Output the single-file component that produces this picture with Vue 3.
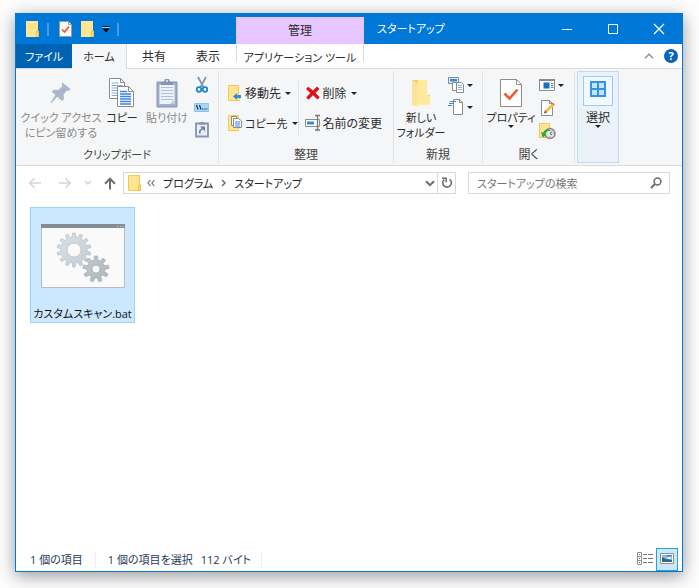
<script setup>
import { ref } from 'vue'

const search = ref('')

function gear(cx, cy, inner, outer, teeth, hole) {
  const step = (Math.PI * 2) / teeth
  const at = (r, a) => `${(cx + r * Math.cos(a)).toFixed(2)} ${(cy + r * Math.sin(a)).toFixed(2)}`
  let d = ''
  for (let i = 0; i < teeth; i++) {
    const a = i * step - Math.PI / 2
    d += `${i ? 'L' : 'M'}${at(inner, a - step * 0.3)}L${at(outer, a - step * 0.18)}L${at(outer, a + step * 0.18)}L${at(inner, a + step * 0.3)}`
  }
  return `${d}ZM${cx - hole} ${cy}a${hole} ${hole} 0 1 0 ${hole * 2} 0a${hole} ${hole} 0 1 0 ${-hole * 2} 0Z`
}

const bigGear = gear(33, 26, 13, 17, 14, 7)
const smallGear = gear(55, 45, 9, 13, 9, 4)
</script>

<template>
  <div class="desktop">
    <main class="window">
      <header class="titlebar">
        <div class="quick">
          <svg class="q-folder" width="14" height="17" viewBox="0 0 14 17"><path d="M0 0h12v10h1v6H0z" fill="#ffe592" /><path d="M10.500 15.500v-5h2v5z" fill="#ffe592" stroke="#e8c04a" /></svg>
          <span class="q-bar"></span>
          <button class="q-prop" aria-label="プロパティ">
            <svg width="13" height="16" viewBox="0 0 13 16"><path d="M.5.500h9l3 3v12H.5z" fill="#fafafa" stroke="#9b9b9b" /><path d="M9.500.500v3h3" fill="none" stroke="#9b9b9b" /><path d="M3 8.500l2.500 2.500L10 5.500" fill="none" stroke="#e8562a" stroke-width="1.700" /></svg>
          </button>
          <button class="q-new" aria-label="新しいフォルダー">
            <svg width="14" height="17" viewBox="0 0 14 17"><path d="M0 0h12v10h1v6H0z" fill="#ffe592" /><path d="M10.500 15.500v-5h2v5z" fill="#ffe592" stroke="#e8c04a" /></svg>
          </button>
          <button class="q-more" aria-label="クイック アクセス ツール バーのカスタマイズ">
            <svg width="8" height="8" viewBox="0 0 8 8"><path d="M0 1.500h8" stroke="#0b1a28" /><path d="M0 2.500h8" stroke="#9cc9ee" /><path d="M.5 3.500h7L4 7.500z" fill="#000" /></svg>
          </button>
          <span class="q-bar"></span>
        </div>
        <div class="context">管理</div>
        <h1 class="title">スタートアップ</h1>
        <div class="controls">
          <button aria-label="最小化"><svg width="12" height="12" viewBox="0 0 12 12"><path d="M1 6.500h10" stroke="#fff" /></svg></button>
          <button aria-label="最大化"><svg width="12" height="12" viewBox="0 0 12 12"><path d="M1.500 1.500h9v9h-9z" fill="none" stroke="#fff" /></svg></button>
          <button aria-label="閉じる"><svg width="12" height="12" viewBox="0 0 12 12"><path d="M1 1l10 10M11 1L1 11" stroke="#fff" stroke-width="1.200" /></svg></button>
        </div>
      </header>

      <nav class="tabs">
        <button class="tab file">ファイル</button>
        <button class="tab home">ホーム</button>
        <button class="tab wide">共有</button>
        <button class="tab wide">表示</button>
        <button class="tab tools">アプリケーション ツール</button>
        <button class="mini collapse" aria-label="リボンの最小化"><svg width="10" height="6" viewBox="0 0 10 6"><path d="M1 5.200l4-4 4 4" fill="none" stroke="#8c8c8c" stroke-width="1.300" /></svg></button>
        <button class="mini help" aria-label="ヘルプ">?</button>
      </nav>

      <section class="ribbon">
        <div class="group clip">
          <div class="tools-row">
            <button class="big off pin">
              <span class="pic"><svg width="22" height="24" viewBox="0 0 22 24"><path d="M12.500 1.500l8 6.500-2 2-1.700-.4-3.300 4.100.6 4.300-2 1.900-4.900-4.200L1 22.500l-.2-1.600 4.700-7-3.700-3.200 1.800-2 4.600.2 4.200-3.500-.8-2z" fill="#a9b7c9" /></svg></span>
              クイック アクセス<br />にピン留めする
            </button>
            <button class="big copy">
              <span class="pic"><svg width="26" height="30" viewBox="0 0 26 30">
                <path d="M.5.500h11l4 4v16H.5z" fill="#fff" stroke="#8b8b8b" /><path d="M11.500.500v4h4" fill="none" stroke="#8b8b8b" /><path d="M2.500 5h7M2.500 7.500h11M2.500 10h11M2.500 12.500h11M2.500 15h11M2.500 17.500h11" stroke="#7daee8" />
                <path d="M8.500 8.500h11l5 5v15h-16z" fill="#fff" stroke="#8b8b8b" /><path d="M19.500 8.500v5h5" fill="none" stroke="#8b8b8b" /><path d="M11 13.500h7M11 16h11M11 18.500h11M11 21h11M11 23.500h11M11 26h11" stroke="#3e84df" stroke-width="1.300" />
              </svg></span>
              コピー
            </button>
            <button class="big off paste">
              <span class="pic"><svg width="22" height="30" viewBox="0 0 22 30"><path d="M1 4h20v25H1z" fill="#9fb0c8" stroke="#8496b2" /><path d="M3.500 7h15v19h-15z" fill="#eef3fa" /><path d="M5 9.500h12M5 12.500h12M5 15.500h12M5 18.500h12M5 21.500h12" stroke="#a9c0df" /><path d="M14 26l4.500-4.500V26z" fill="#bccbe0" /><path d="M5 7V4h3l1-3h4l1 3h3v3z" fill="#8496ac" /><circle cx="11" cy="3" r="1" fill="#eef3fa" /></svg></span>
              貼り付け
            </button>
            <div class="smalls">
              <button class="small" aria-label="切り取り"><svg width="14" height="18" viewBox="0 0 14 18"><path d="M3 1l6 11M11 1L5 12" stroke="#8497a6" stroke-width="1.800" fill="none" /><circle cx="4" cy="13.500" r="2.300" fill="none" stroke="#1884ce" stroke-width="1.700" /><circle cx="10" cy="13.500" r="2.300" fill="none" stroke="#1884ce" stroke-width="1.700" /></svg></button>
              <button class="small" aria-label="パスのコピー"><svg width="15" height="9" viewBox="0 0 15 9"><path d="M.5.500h14v8H.5z" fill="#a9d8f7" stroke="#8ec4e8" /><path d="M2.500 2l1.500 4.500M5.500 2L7 6.500" stroke="#123c5c" stroke-width="1.200" /><path d="M8 6h1.300M10.300 6h1.300M12.400 6h1" stroke="#123c5c" /></svg></button>
              <button class="small" aria-label="ショートカットの貼り付け"><svg width="14" height="17" viewBox="0 0 14 17"><path d="M1 2.500h12v13H1z" fill="#e9eff8" stroke="#8496b2" stroke-width="1.800" /><path d="M4 3.500V1.500h2L7 .3l1 1.200h2v2H4z" fill="#8496ac" /><path d="M4.800 12.500V10L8 7" fill="none" stroke="#71839e" stroke-width="1.700" /><path d="M5 5.500h5v5z" fill="#71839e" /></svg></button>
            </div>
          </div>
          <div class="caption">クリップボード</div>
        </div>

        <div class="group organize">
          <div class="tools-row">
            <div class="lines">
              <button class="line"><svg width="16" height="18" viewBox="0 0 16 18"><path d="M1.500 1.500h10v11h1v4h-11z" fill="#ffe592" stroke="#efc95a" /><path d="M6 12.500l4-3.500v2h4v3h-4v2z" fill="#2d8dde" /></svg>移動先<i class="caret"></i></button>
              <button class="line kana"><svg width="16" height="18" viewBox="0 0 16 18"><path d="M1.500 1.500h10v15h-10z" fill="#ffe592" stroke="#efc95a" /><path d="M4.500 2.500h5v9h-5z" fill="#fff" stroke="#8b8b8b" /><path d="M6.500 4.500h5l3 2.500v6.500h-8z" fill="#fff" stroke="#8b8b8b" /><path d="M8 8h5M8 10h5M8 12h5" stroke="#3e84df" /></svg>コピー先<i class="caret"></i></button>
            </div>
            <span class="split"></span>
            <div class="lines">
              <button class="line"><svg width="16" height="18" viewBox="0 0 16 18"><path d="M1 5l2.200-2.200L8 6.500l4-3.900L14.500 5l-4 4 4.300 4.200-2.300 2.300L8 11.300 3.500 15.700 1.200 13.500 5.300 9z" fill="#d8141c" /></svg>削除<i class="caret"></i></button>
              <button class="line"><svg width="16" height="18" viewBox="0 0 16 18"><path d="M.5 5.500h14v7H.5z" fill="#fff" stroke="#8b8b8b" /><path d="M2 7.500h7v3H2z" fill="#2b8fe6" /><path d="M10 1.500h5M12.500 2v13.500M10 16h5" stroke="#777" stroke-width="1.300" /></svg>名前の変更</button>
            </div>
          </div>
          <div class="caption">整理</div>
        </div>

        <div class="group fresh">
          <div class="tools-row">
            <button class="big">
              <span class="pic"><svg width="20" height="30" viewBox="0 0 20 30"><path d="M1 2h14v15h4v10H1z" fill="#f5cf68" /><path d="M7 2h9v15l3 2v8H7z" fill="#ffe99c" /><path d="M1 2l6 4v23l-6-2z" fill="#ffe39a" /></svg></span>
              新しい<br />フォルダー
            </button>
            <div class="smalls">
              <button class="small" aria-label="新しいアイテム"><svg width="17" height="18" viewBox="0 0 17 18"><path d="M.5 1.500h10v6H.5z" fill="#dcefff" stroke="#8b8b8b" /><path d="M2 3h7v2.500H2z" fill="#368cd8" /><path d="M4.500 6.500h6v8h-6z" fill="#fff" stroke="#8b8b8b" /><path d="M8.500 6.500h5l2 2v8h-7z" fill="#fff" stroke="#8b8b8b" /><path d="M10 9.500h4M10 11.500h4M10 13.500h4" stroke="#7daee8" /></svg><i class="caret"></i></button>
              <button class="small" aria-label="ショートカット"><svg width="17" height="18" viewBox="0 0 17 18"><path d="M5.500 1.500h6l3 3v12h-9z" fill="#fff" stroke="#8b8b8b" /><path d="M11.500 1.500v3h3" fill="none" stroke="#8b8b8b" /><path d="M2 3.500h6M1 5.500h5M0 7.500h4" stroke="#3e84df" /></svg><i class="caret"></i></button>
            </div>
          </div>
          <div class="caption">新規</div>
        </div>

        <div class="group open">
          <div class="tools-row">
            <button class="big">
              <span class="pic"><svg width="22" height="30" viewBox="0 0 22 30"><path d="M.5 1.500h16l5 5v22H.5z" fill="#fff" stroke="#8b8b8b" /><path d="M16.500 1.500v5h5" fill="none" stroke="#8b8b8b" /><path d="M4.500 15.500l5 5 8-9" fill="none" stroke="#f0592a" stroke-width="2.600" /></svg></span>
              プロパティ
              <i class="caret under"></i>
            </button>
            <div class="smalls">
              <button class="small" aria-label="開く"><svg width="17" height="18" viewBox="0 0 17 18"><path d="M.5 3.500h15v11H.5z" fill="#fff" stroke="#8b8b8b" /><path d="M0 4h16" stroke="#8b8b8b" stroke-width="2" /><path d="M4.500 6.500h6v6h-6z" fill="#1570c8" /><path d="M12 7.500h2.500M12 9.500h2.500M12 11.500h2.500" stroke="#777" /></svg><i class="caret"></i></button>
              <button class="small" aria-label="編集"><svg width="17" height="18" viewBox="0 0 17 18"><path d="M2.500 1.500h8l3 3v12h-11z" fill="#fff" stroke="#8b8b8b" /><path d="M10.500 1.500v3h3" fill="none" stroke="#8b8b8b" /><path d="M5 14.500l1-3 7-7 2 2-7 7z" fill="#f6bc45" /><path d="M5 14.500l1-3 2 2z" fill="#555" /><path d="M13 4.500l2 2 .8-.8-2-2z" fill="#e65a3c" /></svg></button>
              <button class="small" aria-label="履歴"><svg width="17" height="18" viewBox="0 0 17 18"><path d="M.5 1.500h10v14H.5z" fill="#ffe592" stroke="#efc95a" /><circle cx="11" cy="11.500" r="5" fill="#e6e6e6" stroke="#888" stroke-width="1.400" /><path d="M13.500 9.200L11 11.500l2 1.500M11 7.800v.8M14.500 11.500h.8M11 14.500v.8" stroke="#555" fill="none" /><path d="M2 10l1.500 5.500L8 13l-1.700-.8c.7-2 2.300-3.400 5-3.700-1-1.700-5.300-2-7.300 2.200z" fill="#2fae3c" /></svg></button>
            </div>
          </div>
          <div class="caption">開く</div>
        </div>

        <button class="select">
          <span class="select-pic"><svg width="16" height="16" viewBox="0 0 16 16"><path d="M1 1h14v14H1zM8 1v14M1 8h14" fill="#c3e6fc" stroke="#3593e0" stroke-width="2" /></svg></span>
          選択
          <i class="caret under"></i>
        </button>
      </section>

      <section class="addressbar">
        <div class="history">
          <button aria-label="戻る"><svg width="14" height="12" viewBox="0 0 14 12"><path d="M13 6H2M6.500 1.200L1.700 6l4.800 4.800" fill="none" stroke="#d5d5d5" stroke-width="1.500" /></svg></button>
          <button aria-label="進む"><svg width="14" height="12" viewBox="0 0 14 12"><path d="M1 6h11M7.500 1.200L12.300 6l-4.800 4.800" fill="none" stroke="#d5d5d5" stroke-width="1.500" /></svg></button>
          <button aria-label="最近表示した場所"><svg width="8" height="6" viewBox="0 0 8 6"><path d="M1 1l3 3 3-3" fill="none" stroke="#d0d0d0" stroke-width="1.400" /></svg></button>
          <button aria-label="上へ"><svg width="12" height="13" viewBox="0 0 12 13"><path d="M6 12.500V2M1 6.700l5-5 5 5" fill="none" stroke="#6d6d6d" stroke-width="2" /></svg></button>
        </div>
        <div class="path">
          <svg width="14" height="17" viewBox="0 0 14 17"><path d="M.5.500h11v9h1v6H.5z" fill="#ffe592" stroke="#efc95a" /><path d="M10.500 15.500v-5h2v5z" fill="#ffe592" stroke="#e8c04a" /></svg>
          <svg class="more" width="8" height="8" viewBox="0 0 8 8"><path d="M3.500 1L1 4l2.500 3M7.300 1L4.800 4l2.500 3" fill="none" stroke="#666" stroke-width="1.100" /></svg>
          <a href="#">プログラム</a>
          <svg class="sep" width="5" height="8" viewBox="0 0 5 8"><path d="M1 1l3 3-3 3" fill="none" stroke="#666" stroke-width="1.400" /></svg>
          <a href="#">スタートアップ</a>
          <button class="drop" aria-label="以前の場所"><svg width="10" height="7" viewBox="0 0 10 7"><path d="M1 1.200l4 4 4-4" fill="none" stroke="#6d6d6d" stroke-width="2" /></svg></button>
          <button class="reload" aria-label="最新の情報に更新"><svg width="12" height="12" viewBox="0 0 12 12"><path d="M8.600 2.300A4.300 4.300 0 1 1 3.200 2.600" fill="none" stroke="#6d6d6d" stroke-width="1.600" /><path d="M1 1.200h4.200v4" fill="none" stroke="#6d6d6d" stroke-width="1.500" /></svg></button>
        </div>
        <label class="search">
          <input v-model="search" type="text" placeholder="スタートアップの検索" aria-label="スタートアップの検索" />
          <svg width="12" height="12" viewBox="0 0 12 12"><circle cx="7.500" cy="4.500" r="3.400" fill="none" stroke="#6d6d6d" stroke-width="1.500" /><path d="M5 7L1 11" stroke="#6d6d6d" stroke-width="2" /></svg>
        </label>
      </section>

      <section class="files">
        <button class="item">
          <svg width="84" height="65" viewBox="0 0 84 65">
            <defs>
              <linearGradient id="metal" x1="0" y1="0" x2="1" y2="1"><stop offset="0" stop-color="#dbe2e7" /><stop offset="1" stop-color="#c3ccd3" /></linearGradient>
              <linearGradient id="steel" x1="0" y1="0" x2="1" y2="1"><stop offset="0" stop-color="#c2cacf" /><stop offset="1" stop-color="#adb6ba" /></linearGradient>
            </defs>
            <path d="M.5.500h83v63H.5z" fill="#fafafa" stroke="#b6bcc1" />
            <path d="M0 0h84v4H0z" fill="#858d92" />
            <path d="M76 2.500h1M79 2.500h1M81.500 2.500h1" stroke="#cfd5d9" />
            <path :d="bigGear" fill="url(#metal)" stroke="#b9c3ca" stroke-width=".8" fill-rule="evenodd" />
            <path :d="smallGear" fill="url(#steel)" stroke="#a5aeb3" stroke-width=".8" fill-rule="evenodd" />
          </svg>
          <span>カスタムスキャン.bat</span>
        </button>
      </section>

      <footer class="status">
        <span class="count">1 個の項目</span>
        <span class="chosen">1 個の項目を選択<span class="size">112 バイト</span></span>
        <button class="view" aria-label="詳細"><svg width="16" height="14" viewBox="0 0 16 14"><path d="M.5.500h4v12h-4zM.5 4.500h4M.5 8.500h4" fill="#fff" stroke="#8f8f8f" /><path d="M2 2.500h1" stroke="#39c" /><path d="M2 6.500h1" stroke="#55a" /><path d="M2 10.500h1" stroke="#a22" /><path d="M6 2.500h4M11 2.500h5M6 6.500h4M11 6.500h5M6 10.500h4M11 10.500h5" stroke="#777" /></svg></button>
        <button class="view active" aria-label="大アイコン"><svg width="14" height="12" viewBox="0 0 14 12"><path d="M.5.500h13v10H.5z" fill="#fff" stroke="#8f8f8f" /><path d="M2 2h10v7H2z" fill="#80bfe9" /><path d="M2 2h4l2 2 4-1V2z" fill="#3c86c9" /><path d="M2 4l4 2 6 1v2H2z" fill="#36648a" /><path d="M7 4h4v2H8z" fill="#eef6fb" /></svg></button>
      </footer>
    </main>
  </div>
</template>

<style>
body {
  margin: 0;
  background: #fff;
}
</style>

<style scoped>
.desktop,
.desktop * {
  box-sizing: border-box;
}
.desktop {
  display: flex;
  min-height: 100vh;
  padding: 13px 16px 16px 15px;
  background: #fdfdfd;
  font-family: "Open Sans", "Noto Sans CJK JP", sans-serif;
  font-feature-settings: "palt";
  font-size: 11px;
  line-height: 15px;
  color: #2b2b2b;
}
button {
  padding: 0;
  border: 0;
  background: none;
  color: inherit;
  font: inherit;
  font-feature-settings: inherit;
  white-space: nowrap;
}
svg {
  display: block;
  flex: none;
}
.window {
  display: flex;
  flex: 1;
  flex-direction: column;
  min-width: 0;
  border: 1px solid #0078d7;
  background: #fff;
  box-shadow: 0 4px 16px rgba(0, 0, 0, 0.4);
}
.titlebar {
  display: flex;
  height: 30px;
  background: #0078d7;
}
.quick {
  display: flex;
  align-items: center;
  width: 220px;
  padding-left: 10px;
}
.q-bar {
  width: 2px;
  height: 13px;
  margin-left: 7px;
  background: #4c9bdc;
}
.q-prop {
  margin-left: 10px;
}
.q-new {
  margin-left: 9px;
}
.q-more {
  margin-left: 7px;
}
.context {
  display: flex;
  align-items: center;
  justify-content: center;
  width: 128px;
  margin-top: 3px;
  background: #e8c6ff;
  font-size: 12px;
}
.title {
  margin: 0;
  padding-left: 13px;
  color: #fff;
  font-size: 11px;
  font-weight: 400;
  line-height: 30px;
}
.controls {
  display: flex;
  margin-left: auto;
}
.controls button {
  display: flex;
  align-items: center;
  justify-content: center;
  width: 46px;
}
.tabs {
  display: flex;
  height: 25px;
  border-bottom: 1px solid #d9dbdc;
}
.tab {
  height: 24px;
}
.wide {
  width: 54px;
  font-size: 12px;
}
.file {
  width: 56px;
  background: #0063b1;
  color: #fff;
}
.home {
  width: 55px;
  height: 25px;
  padding-bottom: 1px;
  border-right: 1px solid #d9dbdc;
  background: #f5f6f7;
}
.tools {
  width: 128px;
  height: 18px;
  margin-left: 1px;
  padding-top: 6px;
  border: solid #d9dbdc;
  border-width: 0 1px;
}
.mini {
  align-self: center;
}
.collapse {
  margin-left: auto;
  margin-right: 10px;
}
.help {
  width: 14px;
  height: 14px;
  margin-right: 4px;
  border-radius: 50%;
  background: #0a62bd;
  color: #fff;
  font-weight: 700;
  line-height: 14px;
}
.ribbon {
  display: flex;
  height: 97px;
  padding: 2px 0;
  border-bottom: 1px solid #d9dbdc;
  background: #f5f6f7;
}
.group {
  display: flex;
  flex-direction: column;
  border-right: 1px solid #e0e2e4;
}
.tools-row {
  display: flex;
  flex: 1;
  padding-top: 5px;
}
.caption {
  padding-bottom: 1px;
  text-align: center;
  color: #444;
  font-size: 12px;
}
.clip .caption {
  font-size: 11px;
}
.clip {
  width: 203px;
}
.organize {
  width: 175px;
}
.fresh {
  width: 89px;
}
.open {
  width: 92px;
}
.big {
  display: flex;
  flex-direction: column;
  align-items: center;
  height: 65px;
  text-align: center;
}
.pic {
  display: flex;
  align-items: center;
  height: 34px;
}
.off {
  color: #8a8a8a;
}
.clip .tools-row {
  padding-left: 3px;
}
.clip .pin {
  width: 84px;
}
.clip .copy {
  width: 38px;
}
.clip .paste {
  width: 52px;
}
.clip .smalls {
  padding-left: 1px;
}
.smalls {
  display: flex;
  flex-direction: column;
  align-items: flex-start;
  gap: 4px;
}
.small {
  display: flex;
  align-items: center;
  justify-content: center;
  height: 18px;
}
.clip .small {
  width: 15px;
}
.caret {
  width: 0;
  height: 0;
  margin-left: 4px;
  border: 3px solid transparent;
  border-top-color: #222;
  border-bottom-width: 0;
}
.small .caret {
  margin-left: 2px;
}
.caret.under {
  margin: 0;
}
.organize .tools-row {
  padding: 10px 0 0 8px;
}
.lines {
  display: flex;
  flex-direction: column;
  gap: 6px;
}
.line {
  display: flex;
  align-items: center;
  height: 24px;
  font-size: 12px;
}
.line.kana {
  font-size: 11px;
}
.line svg {
  margin-right: 2px;
}
.split {
  width: 1px;
  height: 55px;
  margin: 0 6px 0 0;
  background: #e0e2e4;
}
.fresh .big {
  width: 54px;
}
.open .tools-row {
  padding-left: 1px;
}
.open .big {
  width: 54px;
}
.open .smalls {
  gap: 5px;
  padding-left: 1px;
}
.select {
  display: flex;
  flex-direction: column;
  align-items: center;
  width: 42px;
  margin-left: 2px;
  padding-top: 4px;
  border: 1px solid #c0dcf3;
  background: #ecf2f9;
  font-size: 12px;
}
.select-pic {
  display: flex;
  align-items: flex-start;
  justify-content: center;
  width: 30px;
  height: 30px;
  margin-bottom: 4px;
  padding-top: 4px;
  border: 1px solid #99cdf8;
  background: #f2f8fd;
}
.addressbar {
  display: flex;
  gap: 12px;
  padding: 6px 12px 0 12px;
}
.history {
  display: flex;
  align-items: center;
  margin-right: -5px;
}
.history button {
  margin-right: 12px;
}
.history button:first-child {
  margin-right: 16px;
}
.history button:last-child {
  margin-right: 0;
}
.path {
  display: flex;
  flex: 1;
  align-items: center;
  height: 22px;
  padding-left: 4px;
  border: 1px solid #d9d9d9;
}
.path a {
  color: #222;
  text-decoration: none;
  white-space: nowrap;
}
.more {
  margin: 0 8px 0 5px;
}
.sep {
  margin: 0 8px;
}
.drop {
  margin-left: auto;
}
.reload {
  display: flex;
  align-items: center;
  justify-content: center;
  align-self: stretch;
  width: 18px;
  margin-left: 2px;
  border-left: 1px solid #d9d9d9;
}
.search {
  display: flex;
  flex: 0 1 202px;
  align-items: center;
  height: 22px;
  padding: 0 7px 0 8px;
  border: 1px solid #d9d9d9;
}
.search input {
  flex: 1;
  min-width: 0;
  padding: 0;
  border: 0;
  outline: 0;
  background: none;
  font: inherit;
  font-feature-settings: inherit;
}
.search input::placeholder {
  color: #767676;
  opacity: 1;
}
.files {
  flex: 1;
  padding: 13px 14px;
}
.item {
  display: flex;
  flex-direction: column;
  align-items: center;
  gap: 17px;
  width: 105px;
  padding: 16px 0 1px;
  border: 1px solid #99d1ff;
  background: #cce8ff;
  color: #111;
}
.status {
  display: flex;
  align-items: center;
  height: 24px;
  padding: 0 4px 0 14px;
  color: #1e395b;
}
.count {
  padding-right: 12px;
  border-right: 1px solid #eee;
}
.chosen {
  padding: 0 10px 0 12px;
  border-right: 1px solid #eee;
}
.size {
  margin-left: 8px;
}
.view {
  display: flex;
  align-items: center;
  justify-content: center;
}
.chosen + .view {
  margin-left: auto;
  margin-right: 3px;
}
.view.active {
  width: 22px;
  height: 23px;
  border: 1px solid #26a0da;
  background: #cbe8f6;
}
</style>
